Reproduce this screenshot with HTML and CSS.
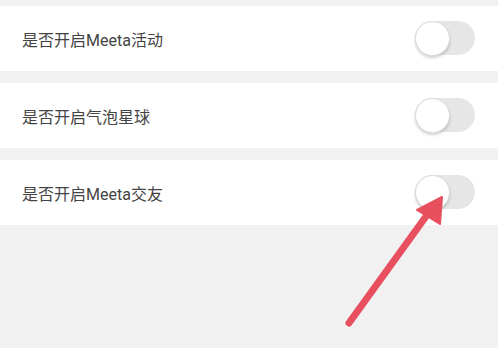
FILE: index.html
```html
<html>

<head>
    <meta charset="utf-8">
    <link rel="stylesheet" href="styles.css">
</head>

<body>
    <div class="settings">
        <div class="setting-row">
            <span class="setting-label">是否开启Meeta活动</span>
            <div class="switch"><div class="switch-knob"></div></div>
        </div>
        <div class="setting-row">
            <span class="setting-label">是否开启气泡星球</span>
            <div class="switch"><div class="switch-knob"></div></div>
        </div>
        <div class="setting-row">
            <span class="setting-label">是否开启Meeta交友</span>
            <div class="switch"><div class="switch-knob"></div></div>
        </div>
    </div>

    <svg class="pointer-arrow" width="498" height="348" viewBox="0 0 498 348">
        <line x1="349" y1="323" x2="427" y2="215" stroke="#e8505f" stroke-width="7" stroke-linecap="round" />
        <polygon points="442,197 417,210 440,224" fill="#e8505f" stroke="#e8505f" stroke-width="2" stroke-linejoin="round" />
    </svg>
</body>

</html>
```

FILE: styles.css
```css
body {
    margin: 0;
    width: 498px;
    height: 348px;
    background: #f1f1f1;
    font-family: Roboto, "Noto Sans CJK SC", sans-serif;
    position: relative;
    overflow: hidden;
}

.settings {
    display: flex;
    flex-direction: column;
    gap: 12px;
    padding-top: 6px;
}

.setting-row {
    height: 65px;
    background: #ffffff;
    display: flex;
    align-items: center;
    justify-content: space-between;
    padding: 0 23px 0 22px;
}

.setting-label {
    font-size: 16px;
    color: #444444;
    margin-top: 1px;
}

.switch {
    width: 60px;
    height: 34px;
    border-radius: 17px;
    background: #e6e6e6;
    display: flex;
    align-items: center;
    margin-top: -1px;
}

.switch-knob {
    width: 35px;
    height: 35px;
    flex-shrink: 0;
    border-radius: 50%;
    background: #ffffff;
    box-sizing: border-box;
    border: 1px solid #dcdcdc;
    box-shadow: 0 2px 3px rgba(0, 0, 0, 0.18);
}

.pointer-arrow {
    position: absolute;
    top: 0;
    left: 0;
}
```
